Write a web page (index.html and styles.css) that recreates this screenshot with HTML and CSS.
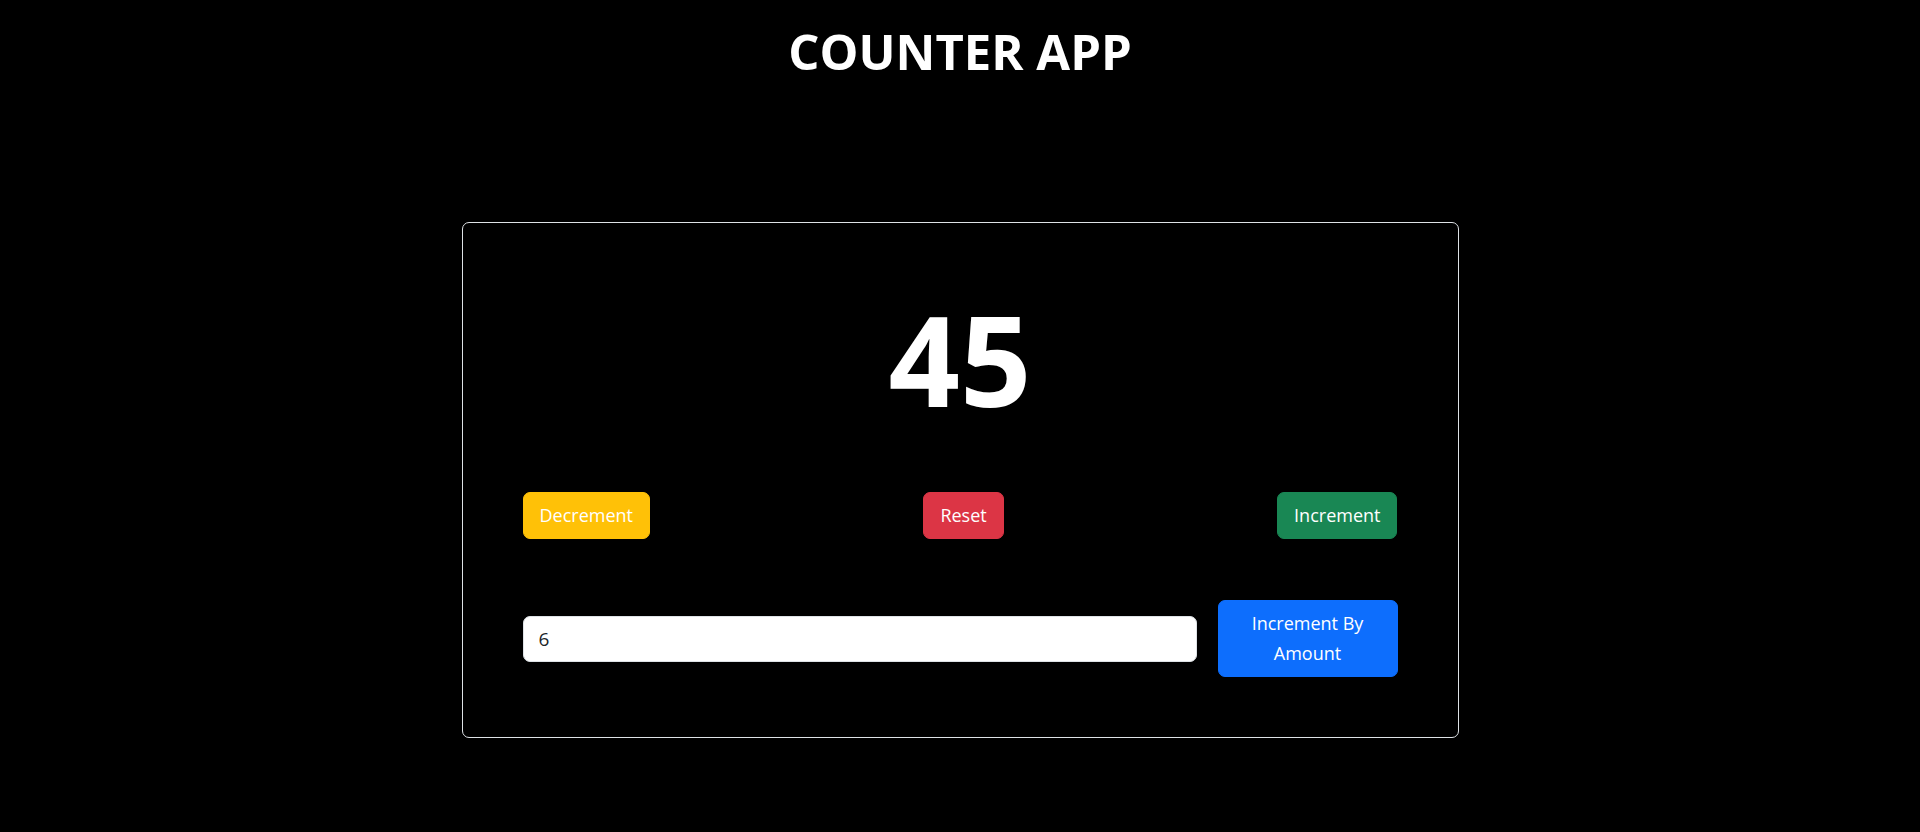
FILE: index.html
```html
<!DOCTYPE html>
<html lang="en">
<head>
<meta charset="utf-8">
<title>Counter App</title>
<link rel="stylesheet" href="styles.css">
</head>
<body>
<main class="page">
  <h1 class="title">COUNTER APP</h1>
  <section class="card">
    <div class="count">45</div>
    <div class="actions">
      <button class="btn btn-warning">Decrement</button>
      <button class="btn btn-danger">Reset</button>
      <button class="btn btn-success">Increment</button>
    </div>
    <div class="amount-row">
      <input class="amount-input" type="text" value="6">
      <button class="btn btn-primary btn-amount">Increment By Amount</button>
    </div>
  </section>
</main>
</body>
</html>
```
FILE: styles.css
```css
* { box-sizing: border-box; }
html, body {
  margin: 0;
  padding: 0;
  background: #000;
  color: #fff;
  font-family: "Open Sans", "Noto Sans", sans-serif;
}
.page {
  display: flex;
  flex-direction: column;
  align-items: center;
  padding-top: 22px;
}
.title {
  margin: 0;
  font-size: 49px;
  line-height: 58px;
  font-weight: 700;
}
.card {
  margin-top: 142px;
  width: 997px;
  border: 1px solid #dee2e6;
  border-radius: 7px;
  padding: 60px;
  display: flex;
  flex-direction: column;
}
.count {
  margin-top: 12px;
  text-align: center;
  font-size: 125px;
  line-height: 128px;
  font-weight: 700;
}
.actions {
  margin-top: 69px;
  display: flex;
  justify-content: space-between;
}
.btn {
  font-family: inherit;
  font-size: 18px;
  line-height: 30px;
  padding: 7px 16px 8px;
  border: 1px solid transparent;
  border-radius: 7px;
  color: #fff;
  cursor: pointer;
}
.btn-warning { background: #ffc107; border-color: #ffc107; }
.btn-danger { background: #dc3545; border-color: #dc3545; }
.btn-success { background: #198754; border-color: #198754; }
.btn-primary { background: #0d6efd; border-color: #0d6efd; }
.amount-row {
  margin-top: 61px;
  display: flex;
  align-items: center;
  gap: 21px;
}
.amount-input {
  flex: 1;
  height: 46px;
  padding: 0 15px;
  font-family: inherit;
  font-size: 19px;
  color: #212529;
  background: #fff;
  border: 1px solid #dee2e6;
  border-radius: 7px;
}
.btn-amount {
  width: 180px;
  text-align: center;
}
```
